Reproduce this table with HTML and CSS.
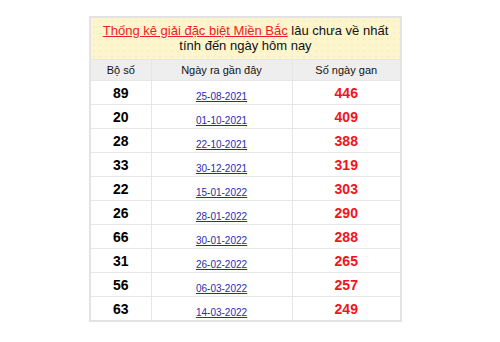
FILE: index.html
```html
<!DOCTYPE html>
<html lang="vi">
<head>
<meta charset="utf-8">
<link rel="stylesheet" href="styles.css">
</head>
<body>
<div class="box">
<table class="gan">
<colgroup><col class="c1"><col class="c2"><col class="c3"></colgroup>
<tr><th colspan="3" class="title"><a href="#" class="tlink">Thống kê giải đặc biệt Miền Bắc</a> lâu chưa về nhất tính đến ngày hôm nay</th></tr>
<tr class="head"><td>Bộ số</td><td>Ngày ra gần đây</td><td>Số ngày gan</td></tr>
<tr><td class="num">89</td><td><a href="#" class="date">25-08-2021</a></td><td class="red">446</td></tr>
<tr><td class="num">20</td><td><a href="#" class="date">01-10-2021</a></td><td class="red">409</td></tr>
<tr><td class="num">28</td><td><a href="#" class="date">22-10-2021</a></td><td class="red">388</td></tr>
<tr><td class="num">33</td><td><a href="#" class="date">30-12-2021</a></td><td class="red">319</td></tr>
<tr><td class="num">22</td><td><a href="#" class="date">15-01-2022</a></td><td class="red">303</td></tr>
<tr><td class="num">26</td><td><a href="#" class="date">28-01-2022</a></td><td class="red">290</td></tr>
<tr><td class="num">66</td><td><a href="#" class="date">30-01-2022</a></td><td class="red">288</td></tr>
<tr><td class="num">31</td><td><a href="#" class="date">26-02-2022</a></td><td class="red">265</td></tr>
<tr><td class="num">56</td><td><a href="#" class="date">06-03-2022</a></td><td class="red">257</td></tr>
<tr><td class="num">63</td><td><a href="#" class="date">14-03-2022</a></td><td class="red">249</td></tr>
</table>
</div>
</body>
</html>
```
FILE: styles.css
```css
html, body { margin: 0; padding: 0; background: #fff; }
body { padding: 16px 0 0 89px; font-family: "Liberation Sans", Arial, sans-serif; }
.box { width: 309px; border: 2px solid #e3e3e3; }
.gan { width: 100%; border-collapse: collapse; border-style: hidden; table-layout: fixed; }
.gan td, .gan th { border: 1px solid #e6e6e6; padding: 0; text-align: center; }
.c1 { width: 60px; }
.c2 { width: 141px; }
.gan .title {
  background-color: #fdf5cc;
  background-image: radial-gradient(circle, #f6ebc0 0.6px, transparent 0.9px);
  background-size: 6px 6px;
  font-size: 13px; font-weight: normal; line-height: 15px; color: #111;
  padding: 5px 10px 6px; height: 30px;
}
.tlink { color: #ee1c25; text-decoration: underline; }
.head td { background: #eeeeee; font-size: 11px; height: 20px; color: #111; }
.num { font-size: 14px; font-weight: bold; color: #000; height: 23px; }
.red { font-size: 14px; font-weight: bold; color: #f0141e; }
.date { font-size: 10px; color: #2b2bb0; text-decoration: underline; position: relative; top: 2px; }
```
